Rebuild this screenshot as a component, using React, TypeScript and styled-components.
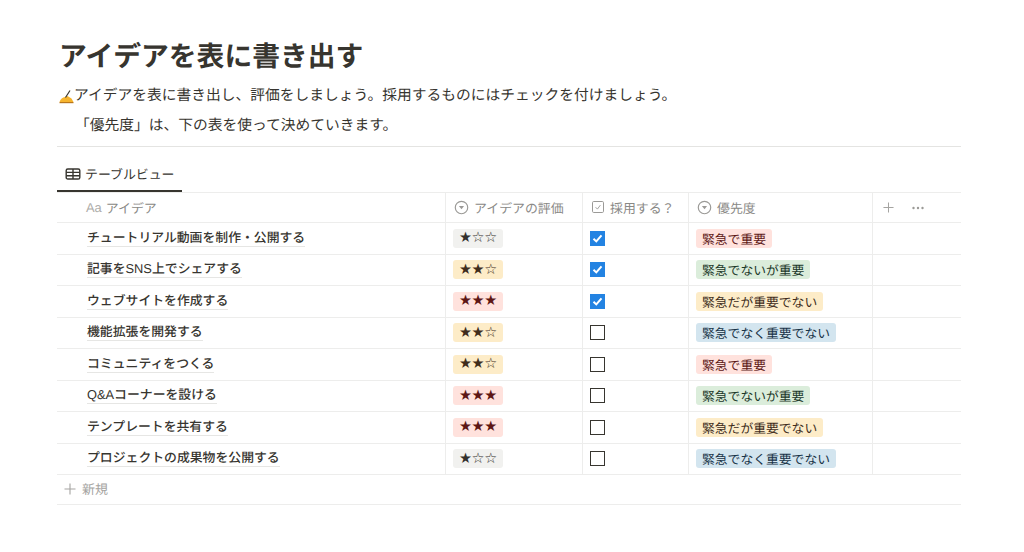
import React from 'react';
import styled, { createGlobalStyle } from 'styled-components';

const GlobalStyle = createGlobalStyle`
  html, body {
    margin: 0;
    padding: 0;
    background: #ffffff;
  }
  body {
    font-family: "Liberation Sans", "Noto Sans CJK JP", sans-serif;
    color: #37352f;
    text-rendering: geometricPrecision;
  }
`;

const Page = styled.div`
  width: 1024px;
  height: 552px;
  box-sizing: border-box;
  padding: 38px 63px 0 57px;
  overflow: hidden;
`;

const Title = styled.h1`
  margin: 0 0 0 2px;
  height: 38px;
  font-size: 27.8px;
  line-height: 38px;
  font-weight: 700;
  color: #37352f;
`;

const Line = styled.p<{ $indent?: number }>`
  margin: 0;
  padding-left: ${(p) => p.$indent ?? 2}px;
  height: 30px;
  font-size: 14.75px;
  line-height: 30px;
  display: flex;
  align-items: center;
`;

const Lines = styled.div`
  margin-top: 5px;
  padding-bottom: 5px;
  border-bottom: 1px solid #e4e4e2;
`;

const Tabs = styled.div`
  display: flex;
  height: 46px;
  box-sizing: border-box;
  padding-top: 13px;
  border-bottom: 1px solid #ededec;
`;

const Tab = styled.div`
  width: 125px;
  height: 32px;
  box-sizing: border-box;
  padding-left: 8px;
  border-bottom: 2px solid #37352f;
  display: flex;
  align-items: center;
  gap: 4px;
  font-size: 12.9px;
  color: #37352f;
  padding-bottom: 3px;
`;

const Row = styled.div<{ $head?: boolean }>`
  display: grid;
  grid-template-columns: 389px 137px 106px 184px 88px;
  height: ${(p) => (p.$head ? 30 : 31.5)}px;
  box-sizing: border-box;
  border-bottom: 1px solid #ededec;
`;

const Cell = styled.div<{ $last?: boolean }>`
  display: flex;
  align-items: center;
  box-sizing: border-box;
  padding-left: 7px;
  border-right: ${(p) => (p.$last ? 'none' : '1px solid #ededec')};
`;

const NameCell = styled(Cell)`
  padding-left: 30px;
`;

const HeadCell = styled(Cell)`
  padding-left: 8px;
  padding-bottom: 1px;
  gap: 5px;
  font-size: 12.9px;
  color: #8a8986;
`;

const HeadName = styled(HeadCell)`
  padding-left: 29px;
  gap: 4px;
`;

const AaMark = styled.span`
  font-size: 12.9px;
  color: #aeadaa;
`;

const Name = styled.span`
  font-size: 12.85px;
  font-weight: 500;
  line-height: 16px;
  color: #37352f;
  border-bottom: 1px solid #e6e6e4;
`;

const tagColors: Record<string, [string, string]> = {
  gray: ['#f1f1ef', '#32302c'],
  red: ['#ffe2dd', '#5d1715'],
  orange: ['#fdecc8', '#402c1b'],
  green: ['#dbeddb', '#1c3829'],
  blue: ['#d3e5ef', '#183347'],
};

const Tag = styled.span<{ $color: string }>`
  display: inline-flex;
  align-items: center;
  height: 19px;
  padding: 0 6px;
  border-radius: 3px;
  font-size: 12.8px;
  white-space: nowrap;
  background: ${(p) => tagColors[p.$color][0]};
  color: ${(p) => tagColors[p.$color][1]};
`;

const Stars = styled(Tag)`
  font-family: "DejaVu Sans", sans-serif;
  font-size: 14.5px;
  letter-spacing: -0.4px;
  width: 50px;
  box-sizing: border-box;
`;

const Check = styled.span<{ $on: boolean }>`
  width: 15px;
  height: 15px;
  box-sizing: border-box;
  display: flex;
  align-items: center;
  justify-content: center;
  background: ${(p) => (p.$on ? '#2383e2' : '#ffffff')};
  border: ${(p) => (p.$on ? 'none' : '1.5px solid #37352f')};
`;

const HeadActions = styled(Cell)`
  gap: 18px;
  padding-left: 10px;
`;

const NewRow = styled.div`
  height: 30px;
  box-sizing: border-box;
  padding: 0 0 2px 7px;
  display: flex;
  align-items: center;
  gap: 6px;
  font-size: 13px;
  color: #a5a4a1;
  border-bottom: 1px solid #ededec;
`;

const TableIcon = () => (
  <svg width="16" height="16" viewBox="0 0 16 16" fill="none" stroke="#37352f" strokeWidth="1.4">
    <rect x="1.2" y="3" width="13.6" height="10" rx="1.6" />
    <path d="M1.2 6.4h13.6M1.2 9.7h13.6M8 3v10" />
  </svg>
);

const SelectIcon = () => (
  <svg width="15" height="15" viewBox="0 0 14 14" fill="none">
    <circle cx="7" cy="7" r="5.8" stroke="#9b9a97" strokeWidth="1.1" />
    <path d="M4.6 5.6h4.8L7 8.6z" fill="#9b9a97" />
  </svg>
);

const CheckHeadIcon = () => (
  <svg width="14" height="14" viewBox="0 0 14 14" fill="none" stroke="#9b9a97">
    <rect x="1.5" y="1.5" width="11" height="11" rx="1.2" strokeWidth="1" />
    <path d="M4.6 7.2l1.8 1.9 3-4" strokeWidth="0.9" />
  </svg>
);

const PlusIcon = ({ size = 12 }: { size?: number }) => (
  <svg width={size} height={size} viewBox="0 0 12 12" stroke="#a5a4a1" strokeWidth="1.1">
    <path d="M6 .5v11M.5 6h11" />
  </svg>
);

const DotsIcon = () => (
  <svg width="12" height="12" viewBox="0 0 12 12" fill="#9b9a97">
    <circle cx="1.5" cy="6" r="1.2" />
    <circle cx="6" cy="6" r="1.2" />
    <circle cx="10.5" cy="6" r="1.2" />
  </svg>
);

const TickIcon = () => (
  <svg width="11" height="11" viewBox="0 0 11 11" fill="none" stroke="#ffffff" strokeWidth="2">
    <path d="M1.5 5.8l2.8 2.6 5.2-6" />
  </svg>
);

// writing hand emoji
const HandIcon = () => (
  <svg width="15" height="15" viewBox="0 0 15 15">
    <path d="M.5 13C1.5 10 3.5 8.5 6 8l2.5-1 4 2.5 2 3.5z" fill="#f6b42e" />
    <path d="M6.5 8.5L11 1.5" stroke="#37352f" strokeWidth="1.2" fill="none" />
    <path d="M.5 13.6h14" stroke="#b9761c" strokeWidth="1.2" />
  </svg>
);

const rows = [
  { name: 'チュートリアル動画を制作・公開する', stars: '★☆☆', starColor: 'gray', on: true, tag: '緊急で重要', tagColor: 'red' },
  { name: '記事をSNS上でシェアする', stars: '★★☆', starColor: 'orange', on: true, tag: '緊急でないが重要', tagColor: 'green' },
  { name: 'ウェブサイトを作成する', stars: '★★★', starColor: 'red', on: true, tag: '緊急だが重要でない', tagColor: 'orange' },
  { name: '機能拡張を開発する', stars: '★★☆', starColor: 'orange', on: false, tag: '緊急でなく重要でない', tagColor: 'blue' },
  { name: 'コミュニティをつくる', stars: '★★☆', starColor: 'orange', on: false, tag: '緊急で重要', tagColor: 'red' },
  { name: 'Q&Aコーナーを設ける', stars: '★★★', starColor: 'red', on: false, tag: '緊急でないが重要', tagColor: 'green' },
  { name: 'テンプレートを共有する', stars: '★★★', starColor: 'red', on: false, tag: '緊急だが重要でない', tagColor: 'orange' },
  { name: 'プロジェクトの成果物を公開する', stars: '★☆☆', starColor: 'gray', on: false, tag: '緊急でなく重要でない', tagColor: 'blue' },
];

const App = () => {
  return (
    <Page>
      <GlobalStyle />
      <Title>アイデアを表に書き出す</Title>
      <Lines>
        <Line $indent={2}>
          <HandIcon />
          アイデアを表に書き出し、評価をしましょう。採用するものにはチェックを付けましょう。
        </Line>
        <Line $indent={18}>「優先度」は、下の表を使って決めていきます。</Line>
      </Lines>
      <Tabs>
        <Tab>
          <TableIcon />
          テーブルビュー
        </Tab>
      </Tabs>
      <Row $head>
        <HeadName>
          <AaMark>Aa</AaMark>
          アイデア
        </HeadName>
        <HeadCell>
          <SelectIcon />
          アイデアの評価
        </HeadCell>
        <HeadCell>
          <CheckHeadIcon />
          採用する？
        </HeadCell>
        <HeadCell>
          <SelectIcon />
          優先度
        </HeadCell>
        <HeadActions $last>
          <PlusIcon size={11} />
          <DotsIcon />
        </HeadActions>
      </Row>
      {rows.map((row) => (
        <Row key={row.name}>
          <NameCell>
            <Name>{row.name}</Name>
          </NameCell>
          <Cell>
            <Stars $color={row.starColor}>{row.stars}</Stars>
          </Cell>
          <Cell>
            <Check $on={row.on}>{row.on && <TickIcon />}</Check>
          </Cell>
          <Cell>
            <Tag $color={row.tagColor}>{row.tag}</Tag>
          </Cell>
          <Cell $last />
        </Row>
      ))}
      <NewRow>
        <PlusIcon />
        新規
      </NewRow>
    </Page>
  );
};

export default App;
